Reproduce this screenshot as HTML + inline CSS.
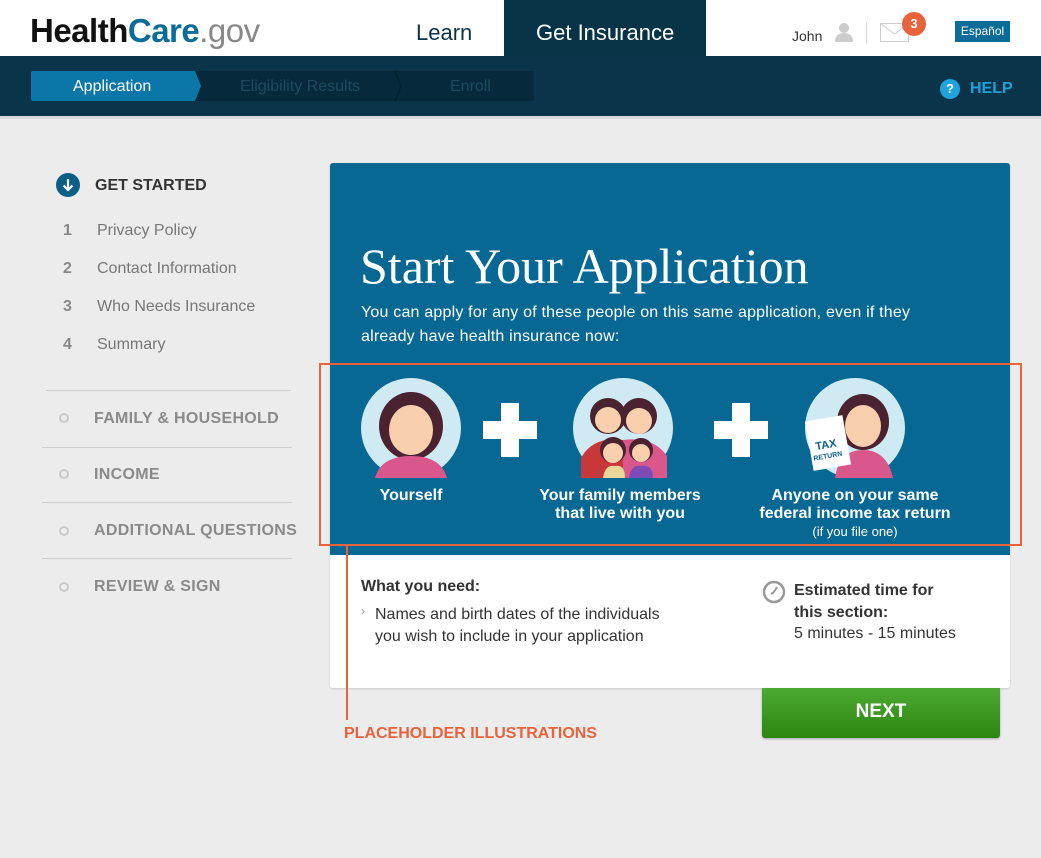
<!DOCTYPE html>
<html><head><meta charset="utf-8"><style>
*{margin:0;padding:0;box-sizing:border-box}
body{width:1041px;height:858px;position:relative;background:#ececec;font-family:"Liberation Sans",sans-serif;overflow:hidden}
.a{position:absolute;white-space:nowrap}
.side{color:#777;font-size:16px}
.sec{font-weight:bold;color:#8a8a8a;font-size:16px;letter-spacing:.3px}
.dot{width:10px;height:10px;border:2px solid #c8c8c8;border-radius:50%}
.hr{height:1px;background:#cfcfcf;left:42px;width:250px}
.plus{background:#fff}
.lbl{color:#fff;font-size:16px;font-weight:bold;text-align:center;line-height:18px}
</style></head><body>
<div class="a" style="left:0;top:0;width:1041px;height:56px;background:#fff"></div>
<div class="a" style="left:30px;top:12px;font-size:33px;font-weight:bold;letter-spacing:-0.5px;color:#111">Health<span style="color:#0b6c98">Care</span><span style="font-weight:normal;color:#888">.gov</span></div>
<div class="a" style="left:416px;top:20px;font-size:22px;color:#0a3349">Learn</div>
<div class="a" style="left:504px;top:0;width:202px;height:56px;background:#073347"></div>
<div class="a" style="left:536px;top:20px;font-size:22px;color:#fff">Get Insurance</div>
<div class="a" style="left:792px;top:28px;font-size:14px;color:#333">John</div>
<svg class="a" style="left:834px;top:22px" width="20" height="20"><circle cx="10" cy="6" r="5" fill="#ccc"/><path d="M1 20 Q1 11 10 11 Q19 11 19 20Z" fill="#ccc"/></svg>
<div class="a" style="left:866px;top:22px;width:1px;height:22px;background:#ddd"></div>
<svg class="a" style="left:880px;top:23px" width="30" height="20"><rect x="0.5" y="0.5" width="28" height="18" fill="none" stroke="#ccc"/><path d="M1 1 L14.5 11 L28 1" fill="none" stroke="#ccc"/></svg>
<div class="a" style="left:902px;top:12px;width:24px;height:24px;border-radius:50%;background:#e8623c;color:#fff;font-size:13px;font-weight:bold;text-align:center;line-height:24px">3</div>
<div class="a" style="left:955px;top:21px;width:55px;height:21px;background:#0b6c98;color:#fff;font-size:12px;text-align:center;line-height:21px">Español</div>
<div class="a" style="left:0;top:56px;width:1041px;height:60px;background:#093449"></div>
<div class="a" style="left:0;top:116px;width:1041px;height:3px;background:#d8d8d8"></div>
<div class="a" style="left:31px;top:71px;width:503px;height:30px;background:#062a3c;border-radius:2px"></div>
<svg class="a" style="left:31px;top:71px" width="380" height="30"><path d="M2 0 H164 L170 15 L164 30 H2 Q0 30 0 28 V2 Q0 0 2 0Z" fill="#0b77a8"/><path d="M364 0 L370 15 L364 30" fill="none" stroke="#02202e" stroke-width="1.5"/></svg>
<div class="a" style="left:73px;top:78px;font-size:16px;color:#fff">Application</div>
<div class="a" style="left:240px;top:78px;font-size:16px;color:#1e4a60">Eligibility Results</div>
<div class="a" style="left:450px;top:78px;font-size:16px;color:#1e4a60">Enroll</div>
<div class="a" style="left:940px;top:79px;width:20px;height:20px;border-radius:50%;background:#1ea3dc;color:#fff;font-size:13px;font-weight:bold;text-align:center;line-height:20px">?</div>
<div class="a" style="left:970px;top:80px;font-size:16px;font-weight:bold;color:#1ea3dc">HELP</div>
<div class="a" style="left:56px;top:173px;width:24px;height:24px;border-radius:50%;background:#0b5f87"></div>
<svg class="a" style="left:56px;top:173px" width="24" height="24"><path d="M12 6 V17 M7.5 12.5 L12 17 L16.5 12.5" stroke="#fff" stroke-width="2.2" fill="none"/></svg>
<div class="a" style="left:95px;top:177px;font-size:16px;font-weight:bold;color:#333">GET STARTED</div>
<div class="a side" style="left:63px;top:222px;font-weight:bold;color:#888">1</div><div class="a side" style="left:97px;top:222px">Privacy Policy</div>
<div class="a side" style="left:63px;top:260px;font-weight:bold;color:#888">2</div><div class="a side" style="left:97px;top:260px">Contact Information</div>
<div class="a side" style="left:63px;top:298px;font-weight:bold;color:#888">3</div><div class="a side" style="left:97px;top:298px">Who Needs Insurance</div>
<div class="a side" style="left:63px;top:336px;font-weight:bold;color:#888">4</div><div class="a side" style="left:97px;top:336px">Summary</div>
<div class="a hr" style="top:390px;left:46px;width:245px"></div>
<div class="a dot" style="left:59px;top:413px"></div><div class="a sec" style="left:94px;top:410px">FAMILY &amp; HOUSEHOLD</div>
<div class="a hr" style="top:447px"></div>
<div class="a dot" style="left:59px;top:469px"></div><div class="a sec" style="left:94px;top:466px">INCOME</div>
<div class="a hr" style="top:502px"></div>
<div class="a dot" style="left:59px;top:526px"></div><div class="a sec" style="left:94px;top:522px">ADDITIONAL QUESTIONS</div>
<div class="a hr" style="top:558px"></div>
<div class="a dot" style="left:59px;top:582px"></div><div class="a sec" style="left:94px;top:578px">REVIEW &amp; SIGN</div>
<div class="a" style="left:330px;top:163px;width:680px;height:525px;background:#fff;border-radius:3px;box-shadow:0 1px 2px rgba(0,0,0,.15)"></div>
<div class="a" style="left:330px;top:163px;width:680px;height:392px;background:#066893;border-radius:3px 3px 0 0"></div>
<div class="a" style="left:360px;top:237px;font-family:'Liberation Serif',serif;font-size:50px;color:#fff">Start Your Application</div>
<div class="a" style="left:361px;top:301px;font-size:16px;line-height:24px;color:#fff;letter-spacing:0.2px">You can apply for any of these people on this same application, even if they<br>already have health insurance now:</div>
<svg class="a" style="left:361px;top:378px" width="100" height="100"><circle cx="50" cy="50" r="50" fill="#cfeaf3"/><ellipse cx="50" cy="48" rx="32" ry="34" fill="#4a2230"/><ellipse cx="50" cy="52" rx="22" ry="25" fill="#f9cfae"/><path d="M14 100 Q20 78 50 78 Q80 78 86 100Z" fill="#d9578b"/></svg>
<svg class="a" style="left:573px;top:378px" width="100" height="100"><circle cx="50" cy="50" r="50" fill="#cfeaf3"/><circle cx="35" cy="38" r="18" fill="#4a2230"/><circle cx="35" cy="42" r="13" fill="#f9cfae"/><circle cx="66" cy="38" r="18" fill="#4a2230"/><circle cx="66" cy="43" r="13" fill="#f9cfae"/><path d="M8 80 Q20 58 50 62 L50 100 H8Z" fill="#c8373a"/><path d="M50 62 Q80 58 94 78 L94 100 H50Z" fill="#d9578b"/><circle cx="40" cy="72" r="13" fill="#4a2230"/><circle cx="40" cy="75" r="10" fill="#f9cfae"/><circle cx="68" cy="72" r="12" fill="#4a2230"/><circle cx="68" cy="75" r="9" fill="#f9cfae"/><path d="M30 100 Q32 86 42 88 Q52 86 52 100Z" fill="#e9d79a"/><path d="M56 100 Q58 86 68 88 Q80 86 80 100Z" fill="#7c4bb8"/></svg>
<svg class="a" style="left:805px;top:378px" width="100" height="100"><circle cx="50" cy="50" r="50" fill="#cfeaf3"/><ellipse cx="58" cy="44" rx="26" ry="28" fill="#4a2230"/><ellipse cx="58" cy="48" rx="18" ry="21" fill="#f9cfae"/><path d="M30 100 Q34 72 58 72 Q82 72 88 100Z" fill="#d9578b"/><rect x="4" y="40" width="38" height="50" fill="#fff" transform="rotate(-10 23 65)"/><text x="10" y="70" font-size="11" font-weight="bold" fill="#0b5f87" font-family="Liberation Sans" transform="rotate(-10 23 65)">TAX</text><text x="6" y="80" font-size="7" font-weight="bold" fill="#0b5f87" font-family="Liberation Sans" transform="rotate(-10 23 65)">RETURN</text></svg>
<div class="a plus" style="left:483px;top:421px;width:54px;height:18px"></div><div class="a plus" style="left:501px;top:403px;width:18px;height:54px"></div>
<div class="a plus" style="left:714px;top:421px;width:54px;height:18px"></div><div class="a plus" style="left:732px;top:403px;width:18px;height:54px"></div>
<div class="a lbl" style="left:361px;top:487px;width:100px">Yourself</div>
<div class="a lbl" style="left:520px;top:487px;width:200px">Your family members<br>that live with you</div>
<div class="a lbl" style="left:740px;top:487px;width:230px">Anyone on your same<br>federal income tax return<br><span style="font-weight:normal;font-size:13px;line-height:16px">(if you file one)</span></div>
<div class="a" style="left:319px;top:363px;width:703px;height:183px;border:2px solid #e8623c"></div>
<div class="a" style="left:346px;top:546px;width:2px;height:174px;background:#e8623c"></div>
<div class="a" style="left:344px;top:725px;font-size:16px;font-weight:bold;color:#e8623c">PLACEHOLDER ILLUSTRATIONS</div>
<div class="a" style="left:361px;top:578px;font-size:16px;font-weight:bold;color:#333">What you need:</div>
<div class="a" style="left:361px;top:604px;font-size:12px;color:#999">›</div>
<div class="a" style="left:375px;top:604px;font-size:16px;line-height:22px;color:#333">Names and birth dates of the individuals<br>you wish to include in your application</div>
<svg class="a" style="left:762px;top:580px" width="24" height="24"><circle cx="12" cy="12" r="10" fill="none" stroke="#999" stroke-width="2.5"/><path d="M12 12 L15 7 M12 12 L9 14" stroke="#999" stroke-width="2"/></svg>
<div class="a" style="left:794px;top:580px;font-size:16px;line-height:22px;font-weight:bold;color:#333">Estimated time for<br>this section:</div>
<div class="a" style="left:794px;top:625px;font-size:16px;color:#333">5 minutes - 15 minutes</div>
<div class="a" style="left:762px;top:688px;width:238px;height:50px;background:linear-gradient(#4caa32,#2c860f);border-radius:0 0 3px 3px;box-shadow:0 1px 2px rgba(0,0,0,.3);color:#fff;font-size:19px;font-weight:bold;text-align:center;line-height:48px">NEXT</div>
</body></html>
